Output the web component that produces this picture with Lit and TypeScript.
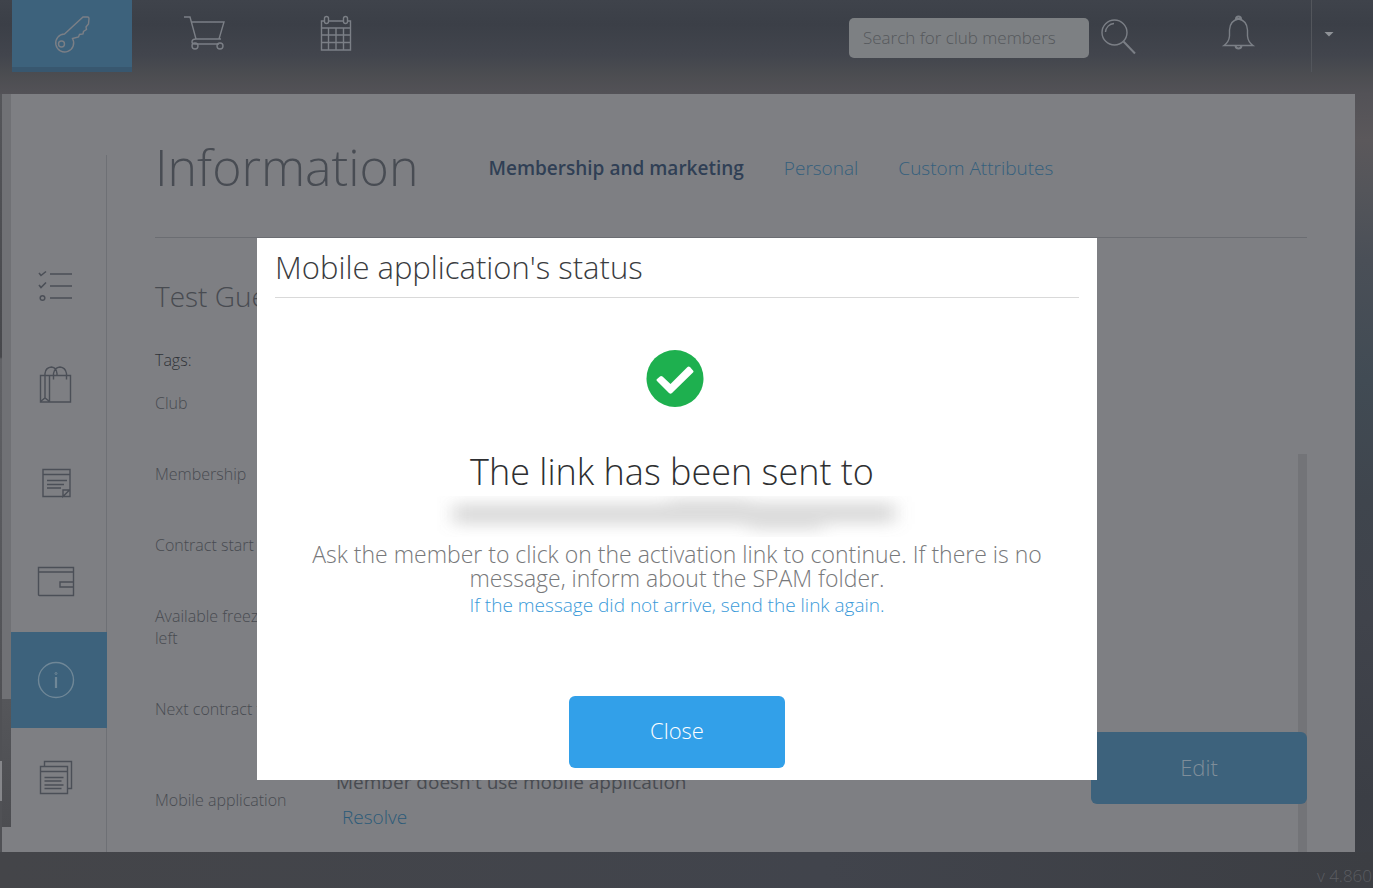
import { LitElement, html, css, svg } from "lit";
import { customElement, property, state } from "lit/decorators.js";

const icons: Record<string, unknown> = {
  key: svg`<path d="M31 3 L35.500 3 Q37 3 37 4.500 L36.500 10 L34 13 L34.500 15.500 L31.500 17.500 L31 20 L27.500 20.500 L26.500 23 L20.500 24.500 A9 9 0 1 1 12.500 20 Z"/><circle cx="9.500" cy="30" r="3"/>`,
  cart: svg`<path d="M0 3 h6 l6 22 h25 M7 8 h33 l-5 17 M12 25 q-4 0 -4 3 q0 2 3 2 h24"/><circle cx="11" cy="32" r="3"/><circle cx="36" cy="32" r="3"/>`,
  calendar: svg`<path d="M8 7 H5.500 V36 H34.500 V7 H32 M12 7 H28 M5.500 14 H34.500 M5.500 21 H34.500 M5.500 28.500 H34.500 M12.500 14 V36 M20 14 V36 M27.500 14 V36"/><rect x="8.500" y="2.500" width="4" height="7" rx="2"/><rect x="27.500" y="2.500" width="4" height="7" rx="2"/>`,
  search: svg`<circle cx="13.500" cy="14.500" r="12.500"/><path d="M4.500 14 A9 9 0 0 1 13 5.500"/><path d="M22.500 23.500 l11.500 12" stroke-width="2"/>`,
  bell: svg`<path d="M2 31.500 H31 Q26 28 25.500 22 V16 Q25 6.500 16.500 5 Q8 6.500 7.500 16 V22 Q7 28 2 31.500 Z"/><path d="M14 5 Q14 2.500 16.500 2.500 Q19 2.500 19 5 Z M13.500 32 Q14 34.500 16.500 34.500 Q19 34.500 19.500 32" stroke-width="2"/>`,
  tasks: svg`<path d="M1 5 l2 2.500 l5 -4 M1 17 l2 2.500 l5 -5 M12 6 h22 M12 18 h22 M12 30 h22" stroke-width="1.600"/><circle cx="4.500" cy="30" r="2.300" stroke-width="1.500"/>`,
  bags: svg`<path d="M2.500 9.500 H32.500 V36 H2.500 Z M7 9.500 V31.500 M11.500 9.500 V36 M7 9.500 V7.500 Q7.500 1.500 13.500 1 Q18.500 1.500 19 7.500 V9.500 M15.500 13.500 V7.500 Q16.500 1.500 22 1 Q27.500 1.500 28.500 7.500 V13.500 M2.500 35.500 L7 32 L11.500 35.500"/>`,
  note: svg`<path d="M5 5.500 H32 V32.500 H5 Z M5 10.500 H32 M9 16.500 H29 M9 20.500 H26 M9 24 H23 M32 25.500 L25 32.500 V26 H32"/>`,
  wallet: svg`<path d="M.5 5.500 H35.500 V33.500 H1.500 Q.5 33.500 .5 32.500 Z M.5 10 H35.500 M35.500 20 H22 V25 H35.500"/>`,
  info: svg`<circle cx="18" cy="20" r="17.500"/><path d="M18 17 V28" stroke-width="2.200"/><circle cx="18" cy="13.500" r="1" stroke-width="1"/>`,
  papers: svg`<path d="M2.500 8.500 H29.500 V35.500 H2.500 Z M2.500 13.500 H29.500 M6.500 19.500 H25.500 M6.500 23 H23.500 M6.500 27 H25.500 M6.500 30.500 H23.500 M6.500 8.500 V3.500 H33.500 V30.500 H29.500"/>`,
};

const icon = (name: string) =>
  html`<svg class="icon" width="40" height="40" viewBox="0 0 40 40" aria-hidden="true">${icons[name]}</svg>`;

const iconStyles = css`
  .icon {
    display: block;
    overflow: visible;
    fill: none;
    stroke: currentColor;
    stroke-width: 1.4;
  }
  button {
    font: inherit;
    color: inherit;
    border: 0;
    padding: 0;
    background: none;
    cursor: pointer;
  }
  a {
    text-decoration: none;
  }
`;

@customElement("top-bar")
class TopBar extends LitElement {
  static styles = [
    iconStyles,
    css`
      :host {
        display: flex;
        height: 94px;
        align-items: flex-start;
        padding-left: 12px;
        color: #7b7f86;
      }
      .nav {
        display: flex;
        gap: 12px;
        flex: 1;
      }
      .item {
        display: grid;
        place-items: center;
        width: 120px;
        height: 72px;
        box-sizing: border-box;
        padding-bottom: 4px;
        color: inherit;
      }
      .item.active {
        background: #3d627c;
        border-bottom: 5px solid #38576f;
        padding-bottom: 0;
      }
      .search {
        display: flex;
        padding-top: 18px;
        gap: 12px;
      }
      .field {
        box-sizing: border-box;
        width: 240px;
        height: 40px;
        border: 0;
        border-radius: 5px;
        padding: 0 14px 2px;
        background: #7d8083;
        font: 300 17px "Open Sans", sans-serif;
      }
      .field::placeholder {
        color: #55585c;
        opacity: 1;
      }
      .bell {
        margin: 14px 49px 0 81px;
      }
      .more {
        width: 62px;
        height: 72px;
        border-left: 1px solid #53565c;
        padding: 0 0 4px 12px;
        color: #8f9297;
      }
      .caret {
        display: block;
        width: 10px;
        height: 5px;
        background: currentColor;
        clip-path: polygon(0 0, 100% 0, 50% 100%);
      }
    `,
  ];
  render() {
    return html`
      <nav class="nav" aria-label="Main">
        <a class="item active" href="#club" aria-label="Club">${icon("key")}</a>
        <a class="item" href="#shop" aria-label="Shop">${icon("cart")}</a>
        <a class="item" href="#calendar" aria-label="Calendar">${icon("calendar")}</a>
      </nav>
      <form class="search" role="search">
        <input class="field" type="text" aria-label="Search for club members" placeholder="Search for club members" />
        <button type="button" aria-label="Search">${icon("search")}</button>
      </form>
      <button class="bell" aria-label="Notifications">${icon("bell")}</button>
      <button class="more" aria-label="Account menu"><span class="caret"></span></button>
    `;
  }
}

@customElement("side-nav")
class SideNav extends LitElement {
  static styles = [
    iconStyles,
    css`
      :host {
        display: block;
        margin-top: 61px;
        padding-top: 85px;
        border-right: 1px solid #6e7075;
      }
      .list {
        display: grid;
        gap: 2px;
        margin-right: -1px;
      }
      .item {
        display: grid;
        place-items: center;
        height: 96px;
        padding-right: 2px;
        color: #4b4f57;
      }
      .item.active {
        background: #3d627c;
        color: #6f8797;
      }
    `,
  ];
  render() {
    const items = [
      ["tasks", "Tasks"],
      ["bags", "Purchases"],
      ["note", "Notes"],
      ["wallet", "Payments"],
      ["info", "Information"],
      ["papers", "Documents"],
    ];
    return html`<nav class="list" aria-label="Member">
      ${items.map(
        ([id, label]) =>
          html`<a class="item ${id === "info" ? "active" : ""}" href="#${id}" aria-label=${label}>${icon(id)}</a>`
      )}
    </nav>`;
  }
}

@customElement("member-info")
class MemberInfo extends LitElement {
  static styles = [
    iconStyles,
    css`
      :host {
        display: flex;
        flex-direction: column;
        position: relative;
        padding: 0 48px;
        color: #484b51;
      }
      .head {
        display: flex;
        align-items: center;
        height: 144px;
        box-sizing: border-box;
        padding-top: 4px;
        border-bottom: 1px solid #6b6d72;
      }
      h1 {
        margin: 0 70px 2px 0;
        font-size: 50px;
        font-weight: 300;
        line-height: 60px;
        color: #484c53;
      }
      .tabs {
        display: flex;
        gap: 40px;
        font-size: 19px;
      }
      .tabs a {
        color: #35607d;
      }
      .tabs .current {
        font-weight: 600;
        color: #303f55;
      }
      h2 {
        margin: 38px 0 0;
        font-size: 28px;
        font-weight: 300;
        line-height: 40px;
      }
      .body {
        display: flex;
        flex: 1;
      }
      .details {
        flex: 1;
      }
      dl {
        margin: 0;
        padding-top: 33px;
        font-size: 16px;
        line-height: 22px;
      }
      .row {
        display: grid;
        grid-template-columns: 136px 1fr;
        column-gap: 45px;
        min-height: 71px;
      }
      .row.short {
        min-height: 43px;
        color: #303338;
      }
      .row.tall {
        min-height: 93px;
      }
      .row.near {
        min-height: 66px;
      }
      .row.last {
        align-items: center;
      }
      dd {
        margin: 0;
        font-size: 19px;
        line-height: 35px;
      }
      .status {
        display: block;
        font-weight: 400;
      }
      dd a {
        margin-left: 6px;
        color: #2c5b79;
      }
      .track {
        width: 9px;
        margin-top: 216px;
        background: #737478;
      }
      .edit {
        position: absolute;
        right: 48px;
        bottom: 48px;
        width: 216px;
        height: 72px;
        padding-bottom: 2px;
        border-radius: 6px;
        background: #3d627c;
        color: #7f8e9a;
        font-size: 22px;
      }
    `,
  ];
  render() {
    return html`
      <header class="head">
        <h1>Information</h1>
        <nav class="tabs" aria-label="Sections">
          <a class="current" href="#membership">Membership and marketing</a>
          <a href="#personal">Personal</a>
          <a href="#custom">Custom Attributes</a>
        </nav>
      </header>
      <div class="body">
        <div class="details">
          <h2>Test Guest</h2>
          <dl>
            <div class="row short"><dt>Tags:</dt></div>
            <div class="row"><dt>Club</dt></div>
            <div class="row"><dt>Membership</dt></div>
            <div class="row"><dt>Contract start date</dt></div>
            <div class="row tall"><dt>Available freeze left</dt></div>
            <div class="row near"><dt>Next contract fee</dt></div>
            <div class="row last">
              <dt>Mobile application</dt>
              <dd>
                <span class="status">Member doesn't use mobile application</span>
                <a href="#resolve">Resolve</a>
              </dd>
            </div>
          </dl>
        </div>
        <div class="track"></div>
      </div>
      <button class="edit">Edit</button>
    `;
  }
}

@customElement("status-dialog")
class StatusDialog extends LitElement {
  @property({ type: Boolean }) open = false;
  static styles = [
    iconStyles,
    css`
      .backdrop {
        position: fixed;
        inset: 0;
        display: flex;
        justify-content: center;
        align-items: flex-start;
        padding: 238px 19px 0 0;
      }
      .dialog {
        display: flex;
        flex-direction: column;
        align-items: center;
        box-sizing: border-box;
        width: 840px;
        max-width: 100%;
        padding: 0 18px 12px;
        background: #fff;
        text-align: center;
      }
      h2 {
        align-self: stretch;
        margin: 0 0 52px;
        border-bottom: 1px solid #d9d9d9;
        font-size: 31px;
        font-weight: 300;
        line-height: 59px;
        text-align: left;
        color: #3a3c40;
      }
      .check {
        margin-right: 5px;
      }
      h3 {
        margin: 40px 10px 0 0;
        font-size: 36px;
        font-weight: 300;
        line-height: 48px;
        color: #2e2f31;
      }
      .address {
        width: 480px;
        height: 41px;
      }
      p {
        margin: 5px 0 0;
        padding: 0 24px;
        font-size: 23px;
        line-height: 24px;
        color: #77787a;
      }
      .again {
        margin-top: 1px;
        font-size: 19px;
        line-height: 28px;
        color: #3a9ad9;
      }
      .close {
        width: 216px;
        height: 72px;
        margin-top: 77px;
        padding-bottom: 4px;
        border-radius: 6px;
        background: #32a0e9;
        color: #fff;
        font-size: 22px;
      }
    `,
  ];
  render() {
    if (!this.open) return null;
    return html`<div class="backdrop">
      <section class="dialog" role="dialog" aria-modal="true" aria-labelledby="title">
        <h2 id="title">Mobile application's status</h2>
        <svg class="check" width="58" height="58" viewBox="0 0 58 58" aria-hidden="true">
          <circle cx="29" cy="28.500" r="28.500" fill="#1eb04f" />
          <path d="M11 29 Q10 30 11 31 L23 43 Q24.500 44.500 26 43 L47 22.500 Q48 21.500 47 20.500 L44 17 Q42.500 16 41.500 17 L24.500 34 L16.500 26.500 Q15 25.500 14 26.500 Z" fill="#fff" />
        </svg>
        <h3>The link has been sent to</h3>
        <svg class="address" viewBox="0 0 480 41" aria-hidden="true">
          <defs><filter id="soft" x="-10%" y="-80%" width="120%" height="260%"><feGaussianBlur stdDeviation="9 7" /></filter></defs>
          <g filter="url(#soft)" fill="#8a8a8a" fill-opacity="0.300">
            <rect x="16" y="7" width="216" height="22" />
            <rect x="232" y="3" width="80" height="26" /><rect x="312" y="6" width="74" height="28" />
            <rect x="386" y="6" width="72" height="22" />
          </g>
        </svg>
        <p>Ask the member to click on the activation link to continue. If there is no message, inform about the SPAM folder.</p>
        <a class="again" href="#resend">If the message did not arrive, send the link again.</a>
        <button class="close" @click=${() => this.dispatchEvent(new CustomEvent("dismiss"))}>Close</button>
      </section>
    </div>`;
  }
}

@customElement("app-root")
class AppRoot extends LitElement {
  @state() private dialogOpen = true;
  static styles = css`
    :host {
      display: flex;
      flex-direction: column;
      min-height: 100vh;
      background: linear-gradient(#3f434b 0, #3b3f47 24px, #42454d 55px, #4c4d51 75px, #535257 94px, #5b585b 140px, #54555a 190px, #4a4f57 260px, #414b54 380px, #3f454d 500px, #40434b 620px, #3b3e45 800px, #3d3f44 100%);
      font-family: "Open Sans", sans-serif;
      font-weight: 300;
    }
    .panel {
      display: grid;
      grid-template-columns: 2px 9px 96px 1fr;
      flex: 1;
      margin-right: 18px;
      background: #7e7f83;
    }
    .sliver {
      display: flex;
      flex-direction: column;
      padding-bottom: 51px;
      background: linear-gradient(#55565a, #47484c 263px, #606165 265px, #505155 80%);
    }
    .sliver::after {
      content: "";
      height: 40px;
      margin-top: auto;
      background: #85868a;
    }
    .edge {
      display: flex;
      flex-direction: column;
      padding-bottom: 25px;
    }
    .edge::before {
      content: "";
      flex: 1;
      background: #707175;
    }
    .edge::after {
      content: "";
      height: 128px;
      background: linear-gradient(#55565a, #4c4d51);
    }
    footer {
      height: 36px;
      box-sizing: border-box;
      padding: 12px 1px 0 0;
      background: linear-gradient(90deg, #444549, #41444c 60%, #3c3e43);
      text-align: right;
      font-size: 17px;
      line-height: 24px;
      color: #5a5c61;
    }
  `;
  render() {
    return html`
      <top-bar></top-bar>
      <main class="panel">
        <div class="sliver"></div>
        <div class="edge"></div>
        <side-nav></side-nav>
        <member-info></member-info>
      </main>
      <footer>v 4.860</footer>
      <status-dialog .open=${this.dialogOpen} @dismiss=${() => (this.dialogOpen = false)}></status-dialog>
    `;
  }
}
